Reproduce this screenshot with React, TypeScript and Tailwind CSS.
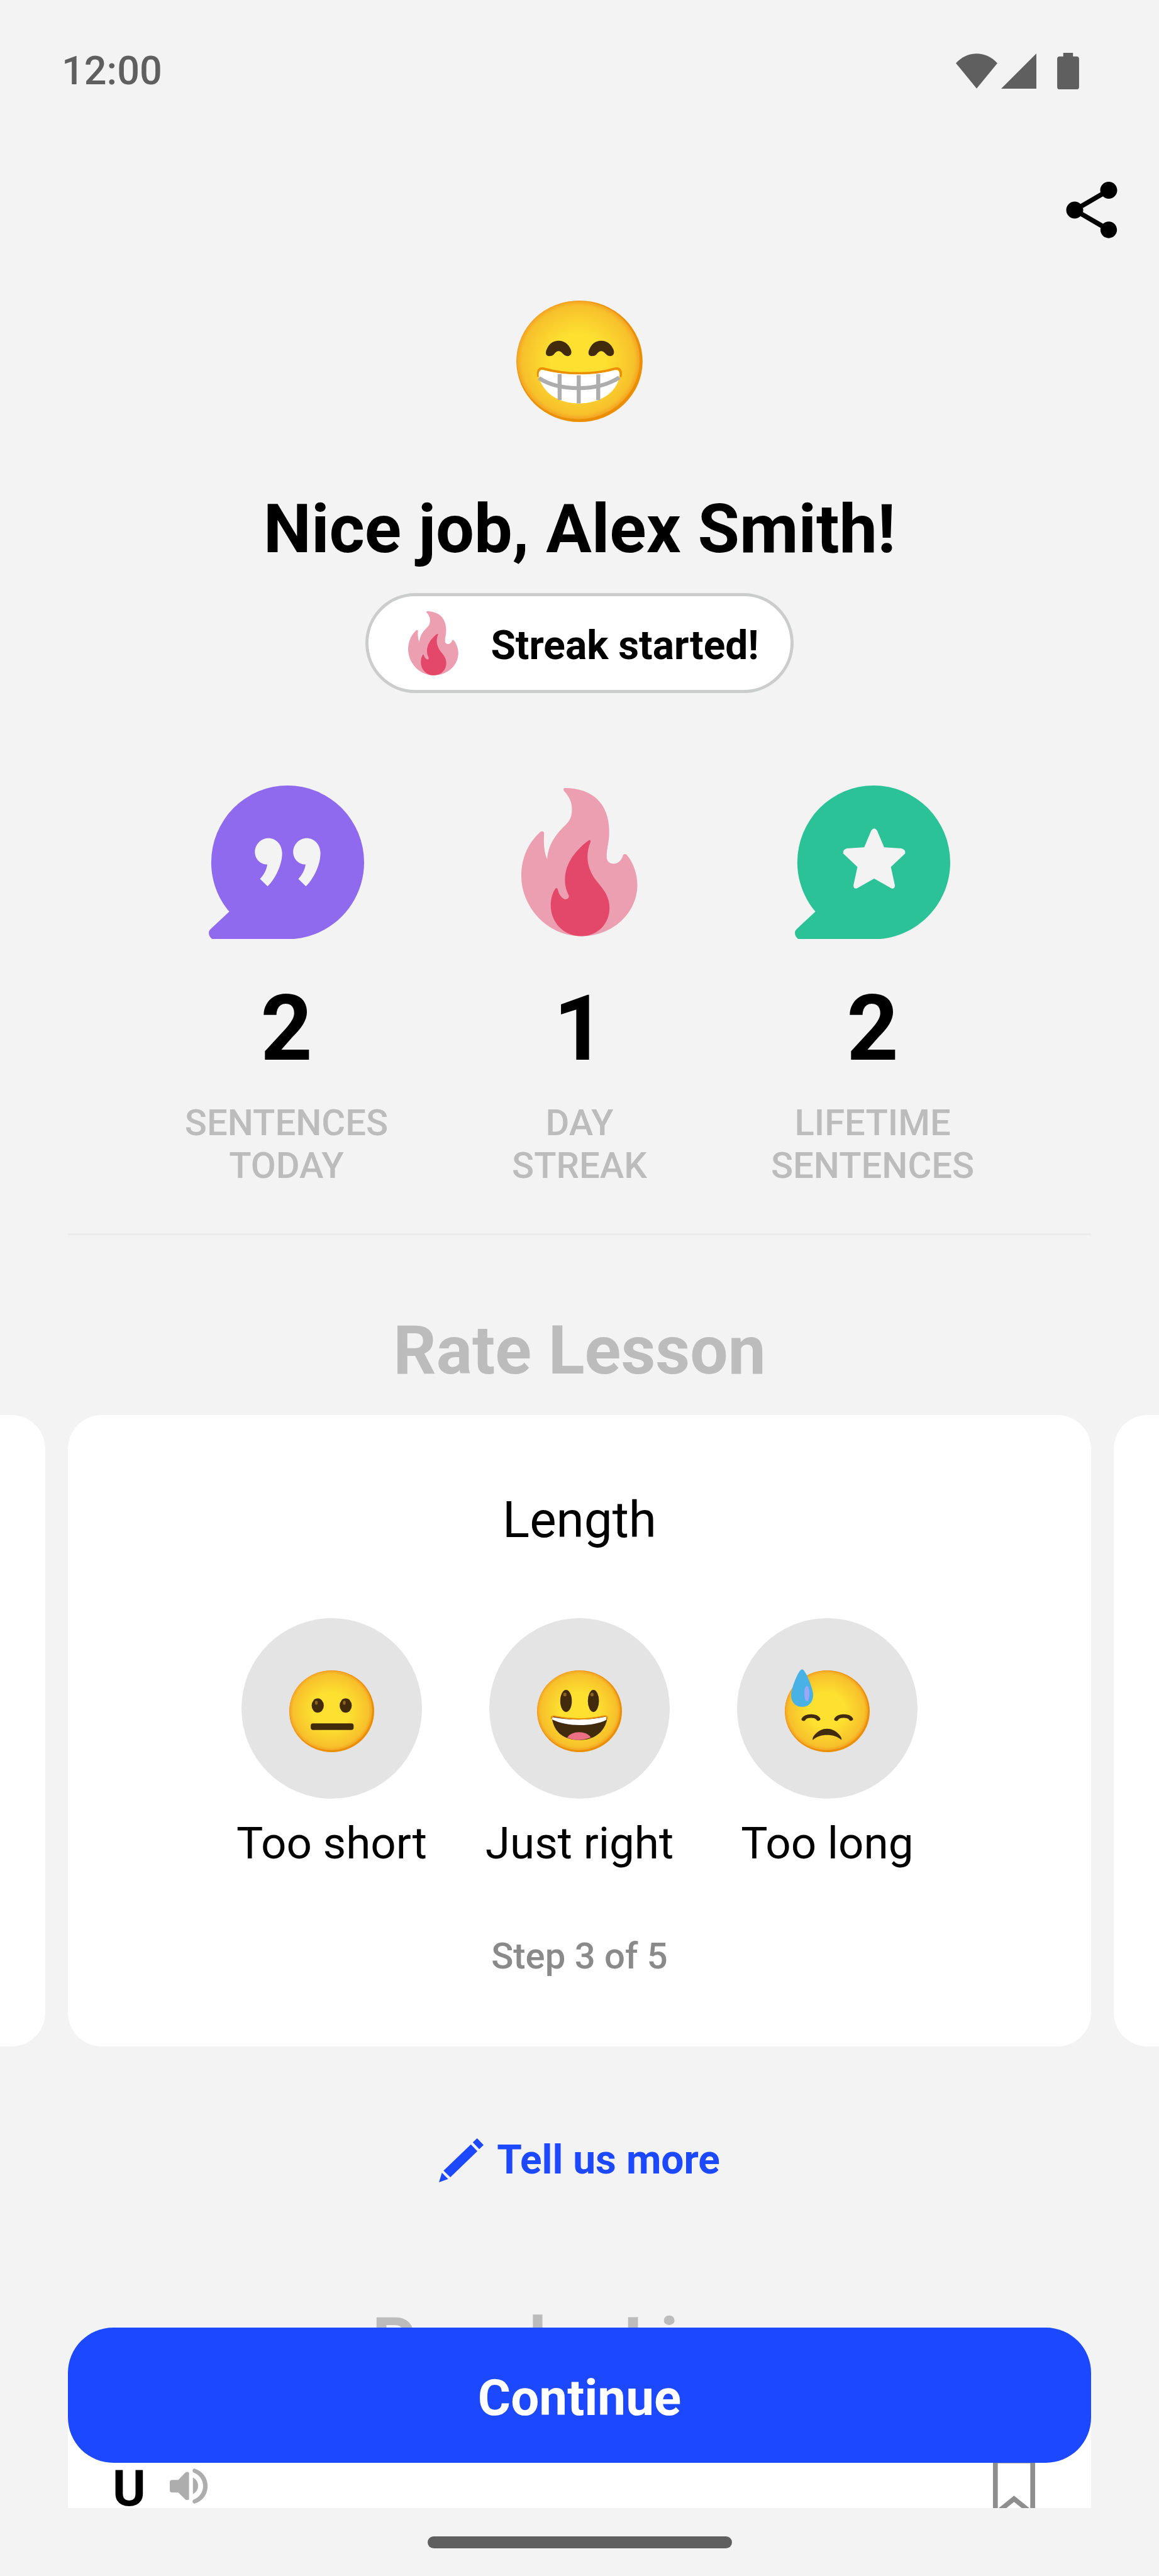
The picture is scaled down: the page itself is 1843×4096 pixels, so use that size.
import type { ReactNode } from 'react';
import { MdShare } from 'react-icons/md';

function Face({ className, children }: { className: string; children: ReactNode }) {
  return (
    <svg viewBox="0 0 209 201" className={className} overflow="visible" aria-hidden="true">
      <defs>
        <radialGradient id="face" cx="0.5" cy="0.5" r="0.5">
          <stop offset="0.45" stopColor="#fde030" />
          <stop offset="0.92" stopColor="#f7c02b" />
          <stop offset="1" stopColor="#f4a223" />
        </radialGradient>
      </defs>
      <ellipse cx="104.5" cy="100.5" rx="104.5" ry="100.5" fill="#eb8f00" />
      <ellipse cx="102.5" cy="98.5" rx="102" ry="98" fill="url(#face)" />
      {children}
    </svg>
  );
}

function GrinFace() {
  const eye =
    'M386 418C366 418 366 400 372 386C384 356 405 341 432 341C460 341 482 358 493 386C499 402 494 418 476 418C466 418 458 412 452 405C440 389 424 389 412 405C404 416 396 418 386 418Z';
  return (
    <Face className="h-[193px] w-[201px]">
      <g transform="scale(.333) translate(-222 -142)">
        <g fill="#422b0d">
          <path d={eye} />
          <path d={eye} transform="translate(212 0)" />
        </g>
        <path
          d="M331 520C326 490 336 476 356 480C470 512 605 512 714 480C736 476 746 492 739 522"
          fill="none"
          stroke="#eb8f00"
          strokeWidth="12"
        />
        <path
          d="M333 515C332 490 342 484 360 488C470 516 605 516 708 488C730 484 738 496 735 518C720 600 640 653 532 653C430 653 350 600 333 515Z"
          fill="#fff"
        />
        <g fill="none" stroke="#adadad" strokeWidth="20">
          <path d="M437 507V636M532 513V653M629 507V636" />
          <path d="M334 527C380 558 440 577 532 577C625 577 685 556 734 524" />
        </g>
      </g>
    </Face>
  );
}

function NeutralFace() {
  return (
    <Face className="h-[130px] w-[135px]">
      <g transform="scale(1.148 .626) translate(-156 -303)">
        <ellipse cx="217" cy="441" rx="13" ry="28" fill="#422b0d" />
        <ellipse cx="277" cy="441" rx="13" ry="28" fill="#422b0d" />
        <ellipse cx="214" cy="430" rx="3" ry="8" fill="#8a6420" />
        <ellipse cx="274" cy="430" rx="3" ry="8" fill="#8a6420" />
        <rect x="202" y="511" width="92" height="26" rx="5" ry="9" fill="#422b0d" />
      </g>
    </Face>
  );
}

function HappyFace() {
  return (
    <Face className="h-[130px] w-[135px]">
      <g transform="scale(.571 .495) translate(-52 -82)">
        <ellipse cx="177" cy="234" rx="25" ry="55" fill="#422b0d" />
        <ellipse cx="295" cy="234" rx="24" ry="55" fill="#422b0d" />
        <ellipse cx="172" cy="202" rx="7" ry="9" fill="#8a6420" />
        <ellipse cx="289" cy="202" rx="7" ry="9" fill="#8a6420" />
        <path
          d="M116 318C116 308 124 308 134 312C200 327 270 327 336 311C350 306 354 315 353 330C340 392 295 428 234 428C170 428 125 392 116 318Z"
          fill="#422b0d"
        />
        <path d="M118 314C190 331 280 331 350 312L351 328C290 363 180 363 117 326Z" fill="#fff" />
        <path d="M182 416C200 380 265 380 284 415C250 432 215 432 182 416Z" fill="#ed7084" />
        <path
          d="M114 324C112 310 120 306 134 311C200 327 270 327 336 310C350 305 357 312 354 326"
          fill="none"
          stroke="#eb8f00"
          strokeWidth="6"
        />
      </g>
    </Face>
  );
}

function SweatFace() {
  return (
    <Face className="h-[130px] w-[135px]">
      <g transform="scale(.571 .495) translate(-1126 -82)">
        <g fill="none" stroke="#422b0d" strokeWidth="18" strokeLinecap="round">
          <path d="M1207 324C1217 304 1260 304 1270 323" />
          <path d="M1348 324C1358 304 1401 304 1411 323" />
        </g>
        <path
          d="M1247 428C1240 415 1270 372 1308 372C1346 372 1376 415 1370 428C1340 395 1276 395 1247 428Z"
          fill="#422b0d"
        />
        <path
          d="M1200 76C1214 76 1248 170 1248 205C1248 240 1228 263 1200 263C1172 263 1153 240 1153 205C1153 170 1186 76 1200 76Z"
          fill="#48b2e7"
        />
        <ellipse cx="1221" cy="197" rx="11" ry="38" fill="#9aa7fb" />
      </g>
    </Face>
  );
}

function Flame({ className }: { className: string }) {
  return (
    <svg viewBox="48 77 368 535" preserveAspectRatio="none" className={className} aria-hidden="true">
      <path
        d="M186 77C270 77 326 130 326 235C326 275 318 290 318 325C318 342 328 350 341 350C355 350 366 335 369 322C371 313 380 313 384 322C402 345 415 390 415 425C415 530 335 611 238 611C125 611 48 500 48 395C48 320 75 270 107 236C114 230 121 234 120 242C118 275 120 310 130 334C132 285 155 245 190 208C205 190 208 175 208 152C208 125 197 105 183 88C180 82 181 77 186 77Z"
        fill="#ec9fb1"
      />
      <path
        d="M262 265C267 264 268 268 266 274C250 320 256 370 288 415C310 445 327 470 327 510C327 565 290 611 238 611C180 611 141 560 141 500C141 475 147 452 157 438C160 436 162 438 163 442C167 460 175 475 187 478C196 478 200 470 198 464C190 445 186 430 186 408C186 345 225 295 262 265Z"
        fill="#e3486a"
      />
    </svg>
  );
}

function Bubble({ color, children }: { color: string; children: ReactNode }) {
  return (
    <svg viewBox="146 67 576 554" preserveAspectRatio="none" className="h-[244px] w-[247px]" aria-hidden="true">
      <path
        d="M438 67A284 278 0 0 1 722 345C722 485 612 608 462 621H158C150 615 146 608 146 599C146 592 150 588 154 584L222 522C180 475 155 410 155 345A283 278 0 0 1 438 67Z"
        fill={color}
      />
      <g fill="#f3f3f3">{children}</g>
    </svg>
  );
}

function QuoteBubble() {
  const mark = 'M367 257C395 257 418 280 418 312C418 350 396 400 364 431L336 404C350 390 360 372 363 352C337 352 317 332 317 307C317 280 340 257 367 257Z';
  return (
    <Bubble color="#8f6aee">
      <path d={mark} />
      <path d={mark} transform="translate(142 0)" />
    </Bubble>
  );
}

function StarBubble() {
  return (
    <Bubble color="#2bc298">
      <path d="M429 230Q440 214 451 230L477 290L541 294Q557 298 555 312L502 361L517 428Q516 442 504 438L440 403L376 438Q364 442 363 428L378 361L325 312Q323 298 339 294L403 290Z" />
    </Bubble>
  );
}

function StatusIcons() {
  return (
    <div className="flex items-center fill-[#5f5f5f]">
      <svg viewBox="72 81 208 175" className="h-[56px] w-[66px]" aria-label="Wi-Fi">
        <path d="M176 256L72 129C130 65 222 65 280 129Z" />
      </svg>
      <svg viewBox="0 0 56 56" className="ml-[6px] h-[56px] w-[56px]" aria-label="Signal">
        <path d="M56 0V56H0Z" />
      </svg>
      <svg viewBox="0 0 36 60" className="ml-[33px] h-[58px] w-[35px]" aria-label="Battery">
        <path d="M10 0H26V6H32Q36 6 36 10V56Q36 60 32 60H4Q0 60 0 56V10Q0 6 4 6H10Z" />
      </svg>
    </div>
  );
}

const stats = [
  { icon: <QuoteBubble />, value: 2, label: ['SENTENCES', 'TODAY'] },
  { icon: <Flame className="h-[236px] w-[185px]" />, value: 1, label: ['DAY', 'STREAK'] },
  { icon: <StarBubble />, value: 2, label: ['LIFETIME', 'SENTENCES'] },
];

const ratings = [
  { face: <NeutralFace />, label: 'Too short' },
  { face: <HappyFace />, label: 'Just right' },
  { face: <SweatFace />, label: 'Too long' },
];

export default function App() {
  return (
    <div className="flex h-screen flex-col overflow-hidden bg-[#f3f3f3] font-[Roboto,sans-serif] text-black">
      <header className="flex h-[226px] shrink-0 items-center justify-between pr-[127px] pl-[98px]">
        <span className="text-[63px] leading-[68px] font-medium text-[#5f5f5f]">12:00</span>
        <StatusIcons />
      </header>

      <main className="relative min-h-0 flex-1 overflow-hidden">
        <div className="flex justify-end pt-[54px] pr-[53px]">
          <button type="button" aria-label="Share">
            <MdShare className="size-[108px]" />
          </button>
        </div>

        <section className="mt-[90px] flex flex-col items-center">
          <GrinFace />
          <h1 className="mt-[106px] text-[108px] leading-[128px] font-bold">Nice job, Alex Smith!</h1>
          <div className="mt-[38px] flex h-[159px] items-center gap-[51px] rounded-full border-[5px] border-[#cbcccc] bg-white pr-[50px] pl-[63px]">
            <Flame className="h-[102px] w-[80px]" />
            <span className="pt-2 text-[64px] leading-[80px] font-bold">Streak started!</span>
          </div>
        </section>

        <section className="mt-[147px] flex justify-center gap-[197px]">
          {stats.map((stat) => (
            <div key={stat.label.join(' ')} className="flex flex-col items-center text-center">
              <div className="flex h-[244px] items-center">{stat.icon}</div>
              <p className="mt-[71px] text-[144px] leading-[144px] font-bold">{stat.value}</p>
              <p className="mt-[43px] text-[58px] leading-[68px] font-medium text-[#bcbcbc]">
                {stat.label[0]}
                <br />
                {stat.label[1]}
              </p>
            </div>
          ))}
        </section>

        <hr className="mx-[108px] mt-[74px] h-[3px] border-0 bg-[#ebebeb]" />

        <section className="mt-[120px]">
          <h2 className="text-center text-[107px] leading-[128px] font-bold text-[#bcbcbc]">Rate Lesson</h2>
          <div className="mt-[38px] flex justify-center gap-[36px] overflow-hidden">
            <div className="w-[calc(100%-216px)] shrink-0 rounded-[54px] bg-white" />
            <div className="flex w-[calc(100%-216px)] shrink-0 flex-col items-center rounded-[54px] bg-white pt-[119px] pb-[110px]">
              <h3 className="text-[80px] leading-[96px]">Length</h3>
              <div className="mt-[108px] flex">
                {ratings.map((rating) => (
                  <button key={rating.label} type="button" className="flex w-[394px] flex-col items-center">
                    <span className="flex size-[287px] items-center justify-center rounded-full bg-[#e4e4e4] pt-2">
                      {rating.face}
                    </span>
                    <span className="mt-[27px] text-[71px] leading-[88px]">{rating.label}</span>
                  </button>
                ))}
              </div>
              <p className="mt-[101px] text-[58px] leading-[68px] font-medium text-[#8a8a8a]">Step 3 of 5</p>
            </div>
            <div className="w-[calc(100%-216px)] shrink-0 rounded-[54px] bg-white" />
          </div>
        </section>

        <div className="mt-[141px] flex justify-center">
          <button type="button" className="flex items-center gap-[21px] text-[64px] leading-[80px] font-bold text-[#1c48ff]">
            <svg viewBox="289 597 165 222" preserveAspectRatio="none" className="h-[70px] w-[71px] fill-current" aria-hidden="true">
              <path d="M430 597L454 631L438 652L414 618ZM407 628L431 662L331 794L306 760ZM300 771L323 802L289 819Z" />
            </svg>
            Tell us more
          </button>
        </div>

        <section className="mt-[186px]">
          <h2 className="text-center text-[107px] leading-[128px] font-bold text-[#bcbcbc]">Popular Lines</h2>
          <div className="mx-[108px] mt-[38px] flex items-start justify-between bg-white px-[71px] pt-[82px] pb-[80px]">
            <div className="flex items-center gap-[38px]">
              <span className="text-[80px] leading-[96px] font-bold">U</span>
              <button type="button" aria-label="Play audio" className="pb-2">
                <svg viewBox="440 930 98 176" preserveAspectRatio="none" className="h-[56px] w-[60px] fill-[#adadad]" aria-hidden="true">
                  <path d="M447 987H462L480 951Q486 943 490 951V1084Q486 1092 480 1084L462 1050H447Q440 1050 440 1040V997Q440 987 447 987Z" />
                  <path d="M500 975C518 992 518 1042 500 1058Z" />
                  <path d="M503 930C550 955 550 1082 503 1106Q496 1098 501 1086C535 1062 535 974 501 950Q496 938 503 930Z" />
                </svg>
              </button>
            </div>
            <button type="button" aria-label="Bookmark" className="pr-[18px]">
              <svg viewBox="0 0 70 98" className="h-[94px] w-[67px]" fill="none" stroke="#8e8e8e" strokeWidth="8" aria-hidden="true">
                <path d="M4 4H66V92L35 67L4 92Z" />
              </svg>
            </button>
          </div>
        </section>

        <button
          type="button"
          className="absolute inset-x-[108px] bottom-[72px] h-[215px] rounded-[72px] bg-[#1c48ff] pt-2 text-[80px] leading-[96px] font-bold text-white"
        >
          Continue
        </button>
      </main>

      <footer className="flex h-[108px] shrink-0 items-center justify-center">
        <div className="h-[19px] w-[484px] rounded-full bg-[#5f5f5f]" />
      </footer>
    </div>
  );
}
